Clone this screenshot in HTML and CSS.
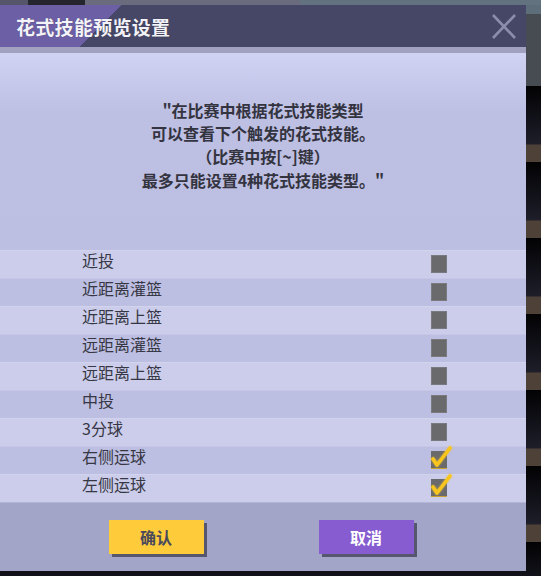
FILE: index.html
```html
<!DOCTYPE html>
<html lang="zh-CN">
<head>
    <meta charset="UTF-8">
    <meta name="viewport" content="width=device-width, initial-scale=1.0">
    <title>花式技能预览设置</title>
    <link rel="stylesheet" href="styles.css">
</head>
<body>
    <div class="dialog">
        <div class="title-bar">
            <h1>花式技能预览设置</h1>
            <button type="button" class="close-btn" aria-label="关闭">
                <svg width="24" height="25" viewBox="0 0 24 25">
                    <path d="M1 1 L23 24 M23 1 L1 24" stroke="#8b8daa" stroke-width="2.6" fill="none"/>
                </svg>
            </button>
        </div>
        <div class="title-edge"></div>

        <div class="intro">
            <p>"在比赛中根据花式技能类型<br>可以查看下个触发的花式技能。<br>（比赛中按[~]键）<br>最多只能设置4种花式技能类型。"</p>
        </div>

        <ul class="skill-list">
            <li class="skill-row"><span class="skill-name">近投</span><span class="check"></span></li>
            <li class="skill-row"><span class="skill-name">近距离灌篮</span><span class="check"></span></li>
            <li class="skill-row"><span class="skill-name">近距离上篮</span><span class="check"></span></li>
            <li class="skill-row"><span class="skill-name">远距离灌篮</span><span class="check"></span></li>
            <li class="skill-row"><span class="skill-name">远距离上篮</span><span class="check"></span></li>
            <li class="skill-row"><span class="skill-name">中投</span><span class="check"></span></li>
            <li class="skill-row"><span class="skill-name">3分球</span><span class="check"></span></li>
            <li class="skill-row">
                <span class="skill-name">右侧运球</span>
                <span class="check checked">
                    <svg class="tick" width="22" height="24" viewBox="0 0 22 24">
                        <path d="M2 14 L6 20 L19 3" stroke="#f7c51e" stroke-width="3.6" fill="none" stroke-linejoin="round" stroke-linecap="round"/>
                    </svg>
                </span>
            </li>
            <li class="skill-row">
                <span class="skill-name">左侧运球</span>
                <span class="check checked">
                    <svg class="tick" width="22" height="24" viewBox="0 0 22 24">
                        <path d="M2 14 L6 20 L19 3" stroke="#f7c51e" stroke-width="3.6" fill="none" stroke-linejoin="round" stroke-linecap="round"/>
                    </svg>
                </span>
            </li>
        </ul>

        <div class="actions">
            <button type="button" class="btn btn-confirm">确认</button>
            <button type="button" class="btn btn-cancel">取消</button>
        </div>
    </div>
</body>
</html>
```

FILE: styles.css
```css
body {
    margin: 0;
    padding: 5px 0 0 0;
    height: 576px;
    box-sizing: border-box;
    overflow: hidden;
    font-family: "Noto Sans CJK SC", "Noto Sans", sans-serif;
    background-color: #1c1414;
    background-image:
        linear-gradient(to right, #55566a 0 28px, #25252e 28px 85px, #6a6b7c 85px 300px, #63727f 300px),
        linear-gradient(#5d6e7a 0 14px, #474c52 14px 86px, transparent 86px),
        repeating-linear-gradient(#020204 0, #1e1e2a 58px, #4e4238 59px, #4e4238 76px);
    background-size: 100% 5px, 100% 100%, 100% 100%;
    background-position: 0 0, 0 0, 0 86px;
    background-repeat: no-repeat, no-repeat, repeat-y;
}
.dialog {
    width: 526px;
    height: 566px;
    display: flex;
    flex-direction: column;
    background: #bcbee2;
}
.title-bar {
    height: 42px;
    flex: none;
    display: flex;
    align-items: center;
    justify-content: space-between;
    padding: 0 10px 0 16px;
    background-color: #464766;
    background-image: linear-gradient(135deg, #6c5fa6 85.6px, transparent 85.6px);
    background-size: 200px 100%;
    background-repeat: no-repeat;
}
.title-bar h1 {
    margin: 0;
    font-size: 19px;
    font-weight: 700;
    color: #f2f2f8;
    letter-spacing: 0.3px;
    text-shadow: 0 0 1px rgba(0, 0, 0, 0.4);
}
.close-btn {
    border: none;
    background: none;
    padding: 0;
    margin-top: 1px;
    width: 24px;
    height: 25px;
    cursor: pointer;
}
.close-btn svg {
    display: block;
}
.title-edge {
    height: 6px;
    flex: none;
    background: #a0a2c0;
}
.intro {
    height: 197px;
    flex: none;
    box-sizing: border-box;
    padding-top: 46px;
    background: linear-gradient(#d1d3f4 0, #bdbfe3 60px, #bcbee2 100%);
}
.intro p {
    margin: 0;
    text-align: center;
    font-size: 16px;
    font-weight: 700;
    line-height: 23.2px;
    color: #343440;
}
.skill-list {
    list-style: none;
    margin: 0;
    padding: 0;
    flex: none;
}
.skill-row {
    height: 28px;
    display: flex;
    align-items: center;
    padding-left: 82px;
    background: #cbcdeb;
    box-shadow: inset 0 1px 0 rgba(255, 255, 255, 0.15);
}
.skill-row:nth-child(even) {
    background: #bcbee2;
}
.skill-name {
    font-size: 16px;
    color: #373744;
    padding-bottom: 9px;
}
.check {
    position: relative;
    margin-left: auto;
    margin-right: 79px;
    width: 16px;
    height: 18px;
    background: #6a6a6c;
    box-shadow: inset 0 0 0 1px #7a7a7e;
}
.check.checked {
    box-shadow: inset 0 -1px 0 #c9a030;
}
.tick {
    position: absolute;
    left: 0;
    top: -6px;
    filter: drop-shadow(0 0 1px rgba(250, 200, 40, 0.7));
}
.actions {
    flex: 1;
    display: flex;
    justify-content: center;
    align-items: flex-start;
    gap: 115px;
    padding: 18px 4px 0 0;
    background: #a2a4c8;
    box-shadow: inset 0 1px 0 #b4b6d8;
}
.btn {
    width: 95px;
    height: 34px;
    border: none;
    padding: 0;
    font-family: "Noto Sans CJK SC", "Noto Sans", sans-serif;
    font-size: 16px;
    font-weight: 700;
    box-shadow: 3px 3px 0 #56576e;
    cursor: pointer;
}
.btn-confirm {
    background: #fecb3a;
    color: #4a4a5c;
}
.btn-cancel {
    background: #865cd0;
    color: #fff;
}
```
